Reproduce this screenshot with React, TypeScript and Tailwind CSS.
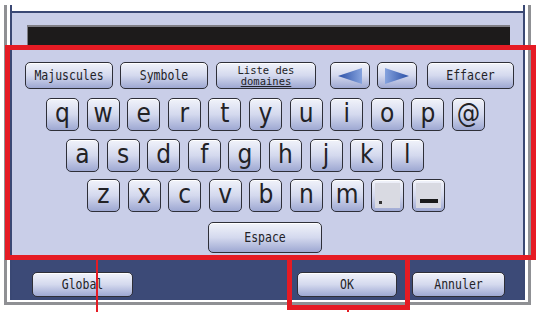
import React from "react";

const keyCls =
  "flex items-center justify-center rounded-[5px] border-[1.5px] border-[#2e2f38] bg-gradient-to-b from-[#f1f3fa] via-[#d4d9ee] to-[#9ea8d2] shadow-[inset_0_1px_0_#ffffff] text-[#222226]";

const letterFont = "font-['DejaVu_Sans_Condensed','DejaVu_Sans',sans-serif]";
const labelFont = "font-['DejaVu_Sans_Mono','Liberation_Mono',monospace]";

function Key({ ch }: { ch: string }) {
  return (
    <div className={`${keyCls} w-[33px] h-[33px]`}>
      <span className={`${letterFont} text-[26px] leading-none -mt-[3px]`}>{ch}</span>
    </div>
  );
}

function SpecialKey({ kind }: { kind: "dot" | "under" }) {
  return (
    <div className={`${keyCls} w-[33px] h-[33px]`}>
      <div className="w-[25px] h-[25px] bg-[#d9dae2] relative">
        {kind === "dot" ? (
          <div className="absolute left-[4px] bottom-[4px] w-[3px] h-[3px] bg-[#333]" />
        ) : (
          <div className="absolute left-[4px] right-[3px] bottom-[5px] h-[4px] bg-[#1a1a1a]" />
        )}
      </div>
    </div>
  );
}

function Btn({ w, h = "h-[27px]", children }: { w: string; h?: string; children: React.ReactNode }) {
  return (
    <div className={`${keyCls} ${w} ${h}`}>
      <span className={`${labelFont} text-[11.5px] scale-y-[1.2] leading-none`}>{children}</span>
    </div>
  );
}

function Arrow({ dir }: { dir: "left" | "right" }) {
  return (
    <div className={`${keyCls} w-[40px] h-[27px]`}>
      <svg width="26" height="18" viewBox="0 0 26 18">
        <defs>
          <linearGradient id={`g-${dir}`} x1={dir === "left" ? "0" : "1"} y1="0" x2={dir === "left" ? "1" : "0"} y2="0">
            <stop offset="0" stopColor="#2a4fa6" />
            <stop offset="1" stopColor="#86a3de" />
          </linearGradient>
        </defs>
        {dir === "left" ? (
          <polygon points="1,9 25,1 25,17" fill={`url(#g-${dir})`} />
        ) : (
          <polygon points="25,9 1,1 1,17" fill={`url(#g-${dir})`} />
        )}
      </svg>
    </div>
  );
}

const row1 = ["q", "w", "e", "r", "t", "y", "u", "i", "o", "p", "@"];
const row2 = ["a", "s", "d", "f", "g", "h", "j", "k", "l"];
const row3 = ["z", "x", "c", "v", "b", "n", "m"];

export default function App() {
  return (
    <div className="w-[537px] h-[312px] bg-white relative overflow-hidden pt-[5px] pl-[4px]">
      {/* device frame */}
      <div className="w-[527px] h-[300px] border-l-[3px] border-r-[3px] border-b-[3px] border-[#8f9094] bg-white pl-[3px] pr-[3px] pb-[2px]">
        <div className="h-full border-x-2 border-[#3a4874] flex flex-col bg-white">
          <div className="h-[6px]" />
          <div className="flex-1 bg-[#c9cee8] border-t-2 border-[#3a4874] flex flex-col">
            <div className="ml-[15px] mt-[12px] w-[483px] h-[20px] bg-[#1d1b1b] border-t-2 border-l border-[#807f86]" />

            <div className="flex mt-[17px] ml-[13px]">
              <Btn w="w-[88px]">Majuscules</Btn>
              <div className="w-[7px]" />
              <Btn w="w-[88px]">Symbole</Btn>
              <div className="w-[8px]" />
              <div className={`${keyCls} w-[100px] h-[27px] flex-col`}>
                <span className={`${labelFont} text-[10.5px] leading-[11px]`}>Liste des</span>
                <span className={`${labelFont} text-[10.5px] leading-[11px] underline`}>domaines</span>
              </div>
              <div className="w-[14px]" />
              <Arrow dir="left" />
              <div className="w-[7px]" />
              <Arrow dir="right" />
              <div className="w-[10px]" />
              <Btn w="w-[87px]">Effacer</Btn>
            </div>

            <div className="flex flex-col gap-[7.5px] mt-[9px]">
              <div className="flex gap-[7.6px] ml-[34px]">
                {row1.map((c) => (
                  <Key key={c} ch={c} />
                ))}
              </div>
              <div className="flex gap-[7.6px] ml-[54px]">
                {row2.map((c) => (
                  <Key key={c} ch={c} />
                ))}
              </div>
              <div className="flex gap-[7.6px] ml-[75px]">
                {row3.map((c) => (
                  <Key key={c} ch={c} />
                ))}
                <SpecialKey kind="dot" />
                <SpecialKey kind="under" />
              </div>
            </div>

            <div className="flex mt-[10px] ml-[196px]">
              <Btn w="w-[114px]" h="h-[31px]">Espace</Btn>
            </div>
          </div>

          <div className="h-[40px] bg-[#3c4a77] flex items-start pt-[12px] pl-[20px]">
            <Btn w="w-[101px]" h="h-[25px]">Global</Btn>
            <div className="w-[164px]" />
            <Btn w="w-[100px]" h="h-[25px]">OK</Btn>
            <div className="w-[15px]" />
            <Btn w="w-[93px]" h="h-[25px]">Annuler</Btn>
          </div>
        </div>
      </div>

      {/* red annotation marks */}
      <div className="absolute left-[5px] top-[45px] w-[531px] h-[215px] border-[5px] border-[#e51b24]" />
      <div className="absolute left-[287px] top-[255px] w-[123px] h-[55px] border-[5px] border-[#e51b24]" />
      <div className="absolute left-[96px] top-[258px] w-[2px] h-[60px] bg-[#e51b24]" />
      <div className="absolute left-[347px] top-[308px] w-[2px] h-[6px] bg-[#e51b24]" />
    </div>
  );
}
